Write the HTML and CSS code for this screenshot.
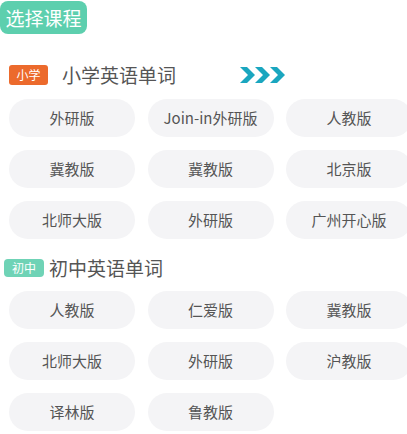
FILE: index.html
```html
<!DOCTYPE html>
<html lang="zh">
<head>
<meta charset="utf-8">
<link rel="stylesheet" href="styles.css">
</head>
<body>
<div class="page">
  <div class="title">选择课程</div>

  <div class="sec-head sec-head-1">
    <span class="tag tag-orange">小学</span>
    <span class="sec-name">小学英语单词</span>
    <svg class="arrows" width="46" height="16" viewBox="0 0 46 16">
      <polygon points="0,0 7,0 15,8 7,16 0,16 8,8" fill="#1aa6bf"/>
      <polygon points="15,0 22,0 30,8 22,16 15,16 23,8" fill="#1aa6bf"/>
      <polygon points="30,0 37,0 45,8 37,16 30,16 38,8" fill="#1aa6bf"/>
    </svg>
  </div>
  <div class="grid">
    <div class="btn">外研版</div>
    <div class="btn">Join-in外研版</div>
    <div class="btn">人教版</div>
    <div class="btn">冀教版</div>
    <div class="btn">冀教版</div>
    <div class="btn">北京版</div>
    <div class="btn">北师大版</div>
    <div class="btn">外研版</div>
    <div class="btn">广州开心版</div>
  </div>

  <div class="sec-head sec-head-2">
    <span class="tag tag-green">初中</span>
    <span class="sec-name">初中英语单词</span>
  </div>
  <div class="grid">
    <div class="btn">人教版</div>
    <div class="btn">仁爱版</div>
    <div class="btn">冀教版</div>
    <div class="btn">北师大版</div>
    <div class="btn">外研版</div>
    <div class="btn">沪教版</div>
    <div class="btn">译林版</div>
    <div class="btn">鲁教版</div>
  </div>
</div>
</body>
</html>
```

FILE: styles.css
```css
html, body {
  margin: 0;
  padding: 0;
  background: #ffffff;
  overflow: hidden;
}
body {
  width: 407px;
  height: 434px;
  font-family: "Noto Sans CJK SC", "Noto Sans", sans-serif;
}
.page {
  display: flex;
  flex-direction: column;
  align-items: flex-start;
}
.title {
  margin-top: 1px;
  height: 33px;
  width: 87px;
  box-sizing: border-box;
  background: #5dcfae;
  color: #fff;
  font-size: 19px;
  line-height: 33px;
  text-align: center;
  border-radius: 8px;
}
.sec-head {
  display: flex;
  align-items: center;
  height: 20px;
}
.sec-head-1 {
  margin-top: 31px;
  padding-left: 9px;
}
.sec-head-2 {
  margin-top: 19px;
  padding-left: 4px;
  height: 19px;
}
.tag {
  display: inline-block;
  color: #fff;
  font-size: 12px;
  text-align: center;
  border-radius: 3px;
}
.tag-orange {
  background: #ec6a2c;
  width: 39px;
  height: 20px;
  line-height: 20px;
}
.tag-green {
  background: #6fd3b6;
  width: 40px;
  height: 18px;
  line-height: 18px;
  border-radius: 4px;
}
.sec-name {
  font-size: 19px;
  color: #555;
  line-height: 20px;
}
.sec-head-1 .sec-name {
  margin-left: 14px;
}
.sec-head-2 .sec-name {
  margin-left: 5px;
}
.arrows {
  margin-left: 64px;
}
.grid {
  display: grid;
  grid-template-columns: repeat(3, 126px);
  column-gap: 12.5px;
  row-gap: 13px;
  padding-left: 9px;
  margin-top: 14px;
}
.btn {
  height: 38px;
  line-height: 38px;
  border-radius: 19px;
  background: #f4f4f6;
  color: #555;
  font-size: 15px;
  text-align: center;
}
```
